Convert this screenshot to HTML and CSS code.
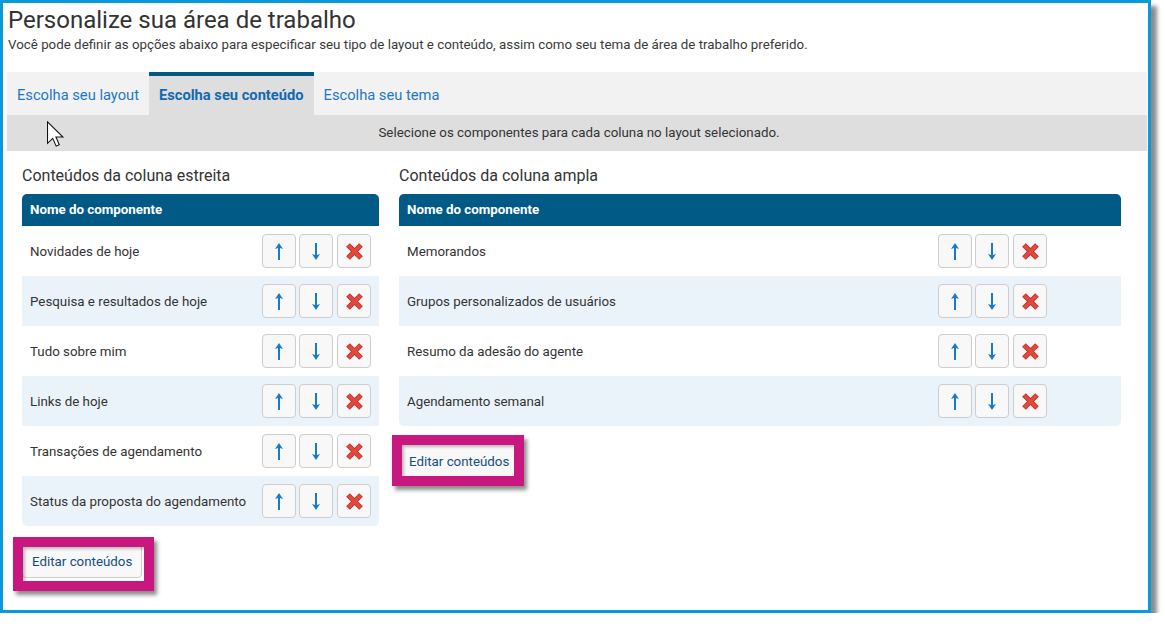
FILE: index.html
```html
<!DOCTYPE html>
<html lang="pt">
<head>
<meta charset="utf-8">
<title>Personalize sua área de trabalho</title>
<link rel="stylesheet" href="styles.css">
</head>
<body>
<div class="frame">
  <h1 class="title">Personalize sua área de trabalho</h1>
  <p class="subtitle">Você pode definir as opções abaixo para especificar seu tipo de layout e conteúdo, assim como seu tema de área de trabalho preferido.</p>

  <div class="tabs">
    <a class="tab">Escolha seu layout</a>
    <a class="tab active">Escolha seu conteúdo</a>
    <a class="tab">Escolha seu tema</a>
  </div>
  <div class="infobar">
    Selecione os componentes para cada coluna no layout selecionado.
    <svg class="cursor" width="19" height="26" viewBox="0 0 12.6 18.6"><path d="M0.6 0.6 L0.6 16 L4.3 12.4 L6.8 18 L9 17 L6.6 11.5 L11.6 11.5 Z" fill="#fff" stroke="#111" stroke-width="0.75" stroke-linejoin="miter"/></svg>
  </div>

  <div class="columns">
    <section class="col narrow">
      <h2 class="col-title">Conteúdos da coluna estreita</h2>
      <div class="table">
        <div class="thead">Nome do componente</div>
        <div class="row"><span class="name">Novidades de hoje</span><span class="actions"><button class="ib"><svg width="8" height="17" viewBox="0 0 8 17"><path d="M4 0 L8 6 L5 5 L5 17 L3 17 L3 5 L0 6 Z" fill="#1a7ac6"/></svg></button><button class="ib"><svg width="8" height="17" viewBox="0 0 8 17"><path d="M4 17 L8 11 L5 12 L5 0 L3 0 L3 12 L0 11 Z" fill="#1a7ac6"/></svg></button><button class="ib"><svg width="17" height="17" viewBox="0 0 17 17"><path d="M2 2 L15 15 M15 2 L2 15" stroke="#c9302a" stroke-width="5.2"/><path d="M2.5 2.5 L14.5 14.5 M14.5 2.5 L2.5 14.5" stroke="#e04a3e" stroke-width="3.2"/></svg></button></span></div>
        <div class="row"><span class="name">Pesquisa e resultados de hoje</span><span class="actions"><button class="ib"><svg width="8" height="17" viewBox="0 0 8 17"><path d="M4 0 L8 6 L5 5 L5 17 L3 17 L3 5 L0 6 Z" fill="#1a7ac6"/></svg></button><button class="ib"><svg width="8" height="17" viewBox="0 0 8 17"><path d="M4 17 L8 11 L5 12 L5 0 L3 0 L3 12 L0 11 Z" fill="#1a7ac6"/></svg></button><button class="ib"><svg width="17" height="17" viewBox="0 0 17 17"><path d="M2 2 L15 15 M15 2 L2 15" stroke="#c9302a" stroke-width="5.2"/><path d="M2.5 2.5 L14.5 14.5 M14.5 2.5 L2.5 14.5" stroke="#e04a3e" stroke-width="3.2"/></svg></button></span></div>
        <div class="row"><span class="name">Tudo sobre mim</span><span class="actions"><button class="ib"><svg width="8" height="17" viewBox="0 0 8 17"><path d="M4 0 L8 6 L5 5 L5 17 L3 17 L3 5 L0 6 Z" fill="#1a7ac6"/></svg></button><button class="ib"><svg width="8" height="17" viewBox="0 0 8 17"><path d="M4 17 L8 11 L5 12 L5 0 L3 0 L3 12 L0 11 Z" fill="#1a7ac6"/></svg></button><button class="ib"><svg width="17" height="17" viewBox="0 0 17 17"><path d="M2 2 L15 15 M15 2 L2 15" stroke="#c9302a" stroke-width="5.2"/><path d="M2.5 2.5 L14.5 14.5 M14.5 2.5 L2.5 14.5" stroke="#e04a3e" stroke-width="3.2"/></svg></button></span></div>
        <div class="row"><span class="name">Links de hoje</span><span class="actions"><button class="ib"><svg width="8" height="17" viewBox="0 0 8 17"><path d="M4 0 L8 6 L5 5 L5 17 L3 17 L3 5 L0 6 Z" fill="#1a7ac6"/></svg></button><button class="ib"><svg width="8" height="17" viewBox="0 0 8 17"><path d="M4 17 L8 11 L5 12 L5 0 L3 0 L3 12 L0 11 Z" fill="#1a7ac6"/></svg></button><button class="ib"><svg width="17" height="17" viewBox="0 0 17 17"><path d="M2 2 L15 15 M15 2 L2 15" stroke="#c9302a" stroke-width="5.2"/><path d="M2.5 2.5 L14.5 14.5 M14.5 2.5 L2.5 14.5" stroke="#e04a3e" stroke-width="3.2"/></svg></button></span></div>
        <div class="row"><span class="name">Transações de agendamento</span><span class="actions"><button class="ib"><svg width="8" height="17" viewBox="0 0 8 17"><path d="M4 0 L8 6 L5 5 L5 17 L3 17 L3 5 L0 6 Z" fill="#1a7ac6"/></svg></button><button class="ib"><svg width="8" height="17" viewBox="0 0 8 17"><path d="M4 17 L8 11 L5 12 L5 0 L3 0 L3 12 L0 11 Z" fill="#1a7ac6"/></svg></button><button class="ib"><svg width="17" height="17" viewBox="0 0 17 17"><path d="M2 2 L15 15 M15 2 L2 15" stroke="#c9302a" stroke-width="5.2"/><path d="M2.5 2.5 L14.5 14.5 M14.5 2.5 L2.5 14.5" stroke="#e04a3e" stroke-width="3.2"/></svg></button></span></div>
        <div class="row"><span class="name">Status da proposta do agendamento</span><span class="actions"><button class="ib"><svg width="8" height="17" viewBox="0 0 8 17"><path d="M4 0 L8 6 L5 5 L5 17 L3 17 L3 5 L0 6 Z" fill="#1a7ac6"/></svg></button><button class="ib"><svg width="8" height="17" viewBox="0 0 8 17"><path d="M4 17 L8 11 L5 12 L5 0 L3 0 L3 12 L0 11 Z" fill="#1a7ac6"/></svg></button><button class="ib"><svg width="17" height="17" viewBox="0 0 17 17"><path d="M2 2 L15 15 M15 2 L2 15" stroke="#c9302a" stroke-width="5.2"/><path d="M2.5 2.5 L14.5 14.5 M14.5 2.5 L2.5 14.5" stroke="#e04a3e" stroke-width="3.2"/></svg></button></span></div>
      </div>
      <div class="edit-wrap"><button class="edit">Editar conteúdos</button><span class="hl hl-left"></span></div>
    </section>

    <section class="col wide">
      <h2 class="col-title">Conteúdos da coluna ampla</h2>
      <div class="table">
        <div class="thead">Nome do componente</div>
        <div class="row"><span class="name">Memorandos</span><span class="actions"><button class="ib"><svg width="8" height="17" viewBox="0 0 8 17"><path d="M4 0 L8 6 L5 5 L5 17 L3 17 L3 5 L0 6 Z" fill="#1a7ac6"/></svg></button><button class="ib"><svg width="8" height="17" viewBox="0 0 8 17"><path d="M4 17 L8 11 L5 12 L5 0 L3 0 L3 12 L0 11 Z" fill="#1a7ac6"/></svg></button><button class="ib"><svg width="17" height="17" viewBox="0 0 17 17"><path d="M2 2 L15 15 M15 2 L2 15" stroke="#c9302a" stroke-width="5.2"/><path d="M2.5 2.5 L14.5 14.5 M14.5 2.5 L2.5 14.5" stroke="#e04a3e" stroke-width="3.2"/></svg></button></span></div>
        <div class="row"><span class="name">Grupos personalizados de usuários</span><span class="actions"><button class="ib"><svg width="8" height="17" viewBox="0 0 8 17"><path d="M4 0 L8 6 L5 5 L5 17 L3 17 L3 5 L0 6 Z" fill="#1a7ac6"/></svg></button><button class="ib"><svg width="8" height="17" viewBox="0 0 8 17"><path d="M4 17 L8 11 L5 12 L5 0 L3 0 L3 12 L0 11 Z" fill="#1a7ac6"/></svg></button><button class="ib"><svg width="17" height="17" viewBox="0 0 17 17"><path d="M2 2 L15 15 M15 2 L2 15" stroke="#c9302a" stroke-width="5.2"/><path d="M2.5 2.5 L14.5 14.5 M14.5 2.5 L2.5 14.5" stroke="#e04a3e" stroke-width="3.2"/></svg></button></span></div>
        <div class="row"><span class="name">Resumo da adesão do agente</span><span class="actions"><button class="ib"><svg width="8" height="17" viewBox="0 0 8 17"><path d="M4 0 L8 6 L5 5 L5 17 L3 17 L3 5 L0 6 Z" fill="#1a7ac6"/></svg></button><button class="ib"><svg width="8" height="17" viewBox="0 0 8 17"><path d="M4 17 L8 11 L5 12 L5 0 L3 0 L3 12 L0 11 Z" fill="#1a7ac6"/></svg></button><button class="ib"><svg width="17" height="17" viewBox="0 0 17 17"><path d="M2 2 L15 15 M15 2 L2 15" stroke="#c9302a" stroke-width="5.2"/><path d="M2.5 2.5 L14.5 14.5 M14.5 2.5 L2.5 14.5" stroke="#e04a3e" stroke-width="3.2"/></svg></button></span></div>
        <div class="row"><span class="name">Agendamento semanal</span><span class="actions"><button class="ib"><svg width="8" height="17" viewBox="0 0 8 17"><path d="M4 0 L8 6 L5 5 L5 17 L3 17 L3 5 L0 6 Z" fill="#1a7ac6"/></svg></button><button class="ib"><svg width="8" height="17" viewBox="0 0 8 17"><path d="M4 17 L8 11 L5 12 L5 0 L3 0 L3 12 L0 11 Z" fill="#1a7ac6"/></svg></button><button class="ib"><svg width="17" height="17" viewBox="0 0 17 17"><path d="M2 2 L15 15 M15 2 L2 15" stroke="#c9302a" stroke-width="5.2"/><path d="M2.5 2.5 L14.5 14.5 M14.5 2.5 L2.5 14.5" stroke="#e04a3e" stroke-width="3.2"/></svg></button></span></div>
      </div>
      <div class="edit-wrap"><button class="edit">Editar conteúdos</button><span class="hl hl-right"></span></div>
    </section>
  </div>
</div>
</body>
</html>
```

FILE: styles.css
```css
* { box-sizing: border-box; }
html, body { margin: 0; padding: 0; background: #fff; }
body { font-family: Roboto, "Liberation Sans", sans-serif; color: #333; }

.frame {
  width: 1151px;
  height: 613px;
  border: 3px solid #0a9ad8;
  padding: 4px 1px 0 4px;
  box-shadow: 6px 6px 4px rgba(0, 0, 0, 0.45);
  background: #fff;
}

.title {
  margin: 0 0 0 1px;
  font-size: 24px;
  line-height: 26px;
  font-weight: 400;
  color: #333;
}
.subtitle {
  margin: 4px 0 0 1px;
  font-size: 13.33px;
  line-height: 16px;
  color: #3a3a3a;
}

.tabs {
  margin-top: 19px;
  display: flex;
  background: #f2f2f2;
  height: 43px;
}
.tab {
  display: block;
  padding: 0 10px;
  border-top: 4px solid transparent;
  line-height: 39px;
  font-size: 14.7px;
  color: #1d77c6;
  cursor: pointer;
}
.tab.active {
  border-top-color: #005a85;
  background: #dedede;
  font-weight: 700;
  color: #1468b2;
}

.infobar {
  position: relative;
  height: 36px;
  line-height: 36px;
  background: #dedede;
  text-align: center;
  font-size: 13.33px;
  color: #333;
  padding-left: 4px;
}
.cursor {
  position: absolute;
  left: 39px;
  top: 6px;
}

.columns {
  display: flex;
  gap: 20px;
  padding: 0 26px 0 15px;
}
.narrow { width: 357px; flex: none; }
.wide { flex: 1; }

.col-title {
  margin: 15px 0 8px;
  font-size: 16px;
  line-height: 20px;
  font-weight: 400;
  color: #333;
}

.table {
  border-radius: 5px;
  overflow: hidden;
}
.thead {
  height: 32px;
  line-height: 32px;
  padding: 0 8px;
  background: #005a85;
  color: #fff;
  font-weight: 700;
  font-size: 13.33px;
}
.row {
  height: 50px;
  display: flex;
  align-items: center;
  padding: 0 8px;
  font-size: 13.33px;
  color: #333;
  background: #fff;
}
.row:nth-child(odd) { background: #ebf3fa; }
.wide .row { padding-right: 74px; }
.name { flex: 1; }
.actions { display: flex; gap: 3px; }
.ib {
  width: 34px;
  height: 34px;
  padding: 0;
  border: 1px solid #cdcdcd;
  border-radius: 4px;
  background: #f8f8f8;
  display: flex;
  align-items: center;
  justify-content: center;
}
.ib + .ib + .ib { margin-left: 1px; }

.edit-wrap {
  position: relative;
  display: inline-block;
  margin-top: 18px;
}
.edit {
  display: block;
  height: 34px;
  padding: 0 9px;
  border: 1px solid #cccccc;
  border-radius: 4px;
  background: #f8f8f8;
  font-family: Roboto, "Liberation Sans", sans-serif;
  font-size: 13.33px;
  color: #15507f;
}
.hl {
  position: absolute;
  border: 10px solid #c8177f;
  box-shadow: 3px 4px 4px rgba(0, 0, 0, 0.45), inset 2px 2px 3px rgba(0, 0, 0, 0.25);
}
.hl-left { top: -7px; left: -9px; right: -12px; bottom: -13px; }
.hl-right { top: -9px; left: -7px; right: -5px; bottom: -8px; }
```
